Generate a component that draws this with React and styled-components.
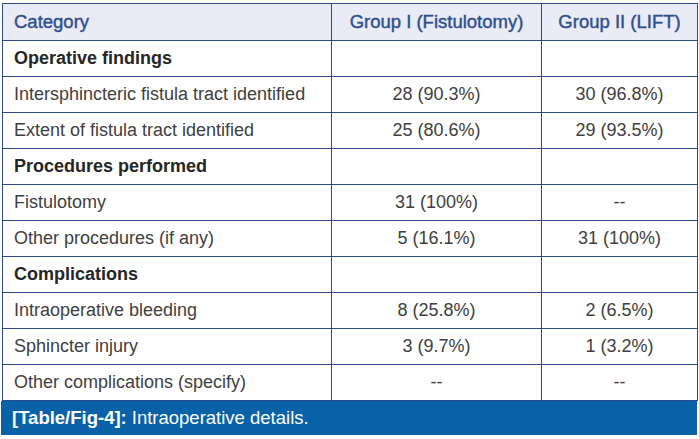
import React from "react";
import styled, { createGlobalStyle } from "styled-components";

const Global = createGlobalStyle`
  html, body { margin: 0; padding: 0; background: #ffffff; }
  body { font-family: "Liberation Sans", Arial, sans-serif; }
`;

const Figure = styled.div`
  width: 699px;
  padding: 3px 0 0 0;
  box-sizing: border-box;
`;

const Table = styled.table`
  margin-left: 2px;
  width: 695px;
  border-collapse: collapse;
  table-layout: fixed;
  font-size: 18px;
  color: #3a3a3a;
`;

const Col = styled.col`
  width: ${(p) => p.$w}px;
`;

const HeadCell = styled.th`
  height: 36px;
  padding: 0 11px;
  border: 1px solid #2c4a86;
  background: #e9ebf6;
  color: #2f4e8c;
  font-size: 18.5px;
  font-weight: normal;
  text-align: ${(p) => (p.$center ? "center" : "left")};
  -webkit-text-stroke: 0.4px #2f4e8c;
`;

const Cell = styled.td`
  height: 35px;
  padding: 0 11px;
  border: 1px solid #2c4a86;
  text-align: ${(p) => (p.$center ? "center" : "left")};
  font-weight: ${(p) => (p.$bold ? "bold" : "normal")};
  color: ${(p) => (p.$bold ? "#262626" : "#404040")};
`;

const Caption = styled.div`
  margin-left: 1px;
  width: 696px;
  height: 34px;
  background: #0962a8;
  color: #ffffff;
  font-size: 18.5px;
  display: flex;
  align-items: center;
  padding-left: 11px;
  box-sizing: border-box;
`;

const CapLabel = styled.span`
  font-weight: bold;
  margin-right: 5px;
`;

const rows = [
  { label: "Operative findings", section: true },
  { label: "Intersphincteric fistula tract identified", a: "28 (90.3%)", b: "30 (96.8%)" },
  { label: "Extent of fistula tract identified", a: "25 (80.6%)", b: "29 (93.5%)" },
  { label: "Procedures performed", section: true },
  { label: "Fistulotomy", a: "31 (100%)", b: "--" },
  { label: "Other procedures (if any)", a: "5 (16.1%)", b: "31 (100%)" },
  { label: "Complications", section: true },
  { label: "Intraoperative bleeding", a: "8 (25.8%)", b: "2 (6.5%)" },
  { label: "Sphincter injury", a: "3 (9.7%)", b: "1 (3.2%)" },
  { label: "Other complications (specify)", a: "--", b: "--" },
];

export default function App() {
  return (
    <>
      <Global />
      <Figure>
        <Table>
          <colgroup>
            <Col $w={329} />
            <Col $w={210} />
            <Col $w={156} />
          </colgroup>
          <thead>
            <tr>
              <HeadCell>Category</HeadCell>
              <HeadCell $center>Group I (Fistulotomy)</HeadCell>
              <HeadCell $center>Group II (LIFT)</HeadCell>
            </tr>
          </thead>
          <tbody>
            {rows.map((r) => (
              <tr key={r.label}>
                <Cell $bold={r.section}>{r.label}</Cell>
                <Cell $center>{r.a || ""}</Cell>
                <Cell $center>{r.b || ""}</Cell>
              </tr>
            ))}
          </tbody>
        </Table>
        <Caption>
          <CapLabel>[Table/Fig-4]:</CapLabel>
          Intraoperative details.
        </Caption>
      </Figure>
    </>
  );
}
